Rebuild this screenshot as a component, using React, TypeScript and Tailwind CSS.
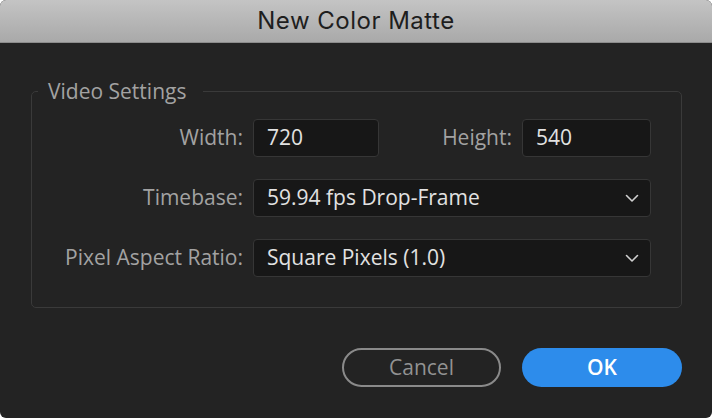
import React from "react";

function Chevron() {
  return (
    <svg width="14" height="9" viewBox="0 0 14 9" className="shrink-0">
      <path d="M1.5 1.5 L7 7 L12.5 1.5" fill="none" stroke="#d0d0d0" strokeWidth="1.6" strokeLinecap="round" strokeLinejoin="round" />
    </svg>
  );
}

function Select({ value }: { value: string }) {
  return (
    <div className="flex h-[38px] w-[398px] items-center justify-between rounded-[4px] border border-[#363636] bg-[#171717] pl-[13px] pr-[11px] text-[21px] text-[#e2e2e2]">
      <span>{value}</span>
      <Chevron />
    </div>
  );
}

export default function App() {
  const font = { fontFamily: '"Open Sans", "Liberation Sans", sans-serif' };
  return (
    <div className="h-[418px] w-[712px] bg-white" style={font}>
      <div className="flex h-full w-full flex-col overflow-hidden rounded-[6px] bg-[#232323]">
        <div
          className="flex h-[43px] shrink-0 items-center justify-center border-b border-[#8c8c8c] bg-gradient-to-b from-[#c4c4c4] to-[#a9a9a9] text-[24px] tracking-[0.5px] text-[#1e1e1e]"
          style={{ fontFamily: 'Inter, "Liberation Sans", sans-serif' }}
        >
          New Color Matte
        </div>
        <div className="flex flex-1 flex-col pl-[31px] pr-[30px] pt-[34px]">
          <fieldset className="m-0 h-[231px] w-[651px] rounded-[5px] border border-[#3a3a3a] p-0">
            <legend className="ml-[6px] pl-[10px] pr-[17px] text-[21px] leading-[28px] text-[#a2a2a2]">Video Settings</legend>
            <div className="grid grid-cols-[211px_398px] items-center gap-x-[10px] gap-y-[22px] pt-[14px]">
              <div className="text-right text-[21px] text-[#a2a2a2]">Width:</div>
              <div className="flex items-center">
                <div className="flex h-[38px] w-[126px] items-center rounded-[4px] border border-[#363636] bg-[#171717] pl-[13px] text-[21px] text-[#e2e2e2]">720</div>
                <div className="flex-1 pr-[10px] text-right text-[21px] text-[#a2a2a2]">Height:</div>
                <div className="flex h-[38px] w-[129px] items-center rounded-[4px] border border-[#363636] bg-[#171717] pl-[13px] text-[21px] text-[#e2e2e2]">540</div>
              </div>
              <div className="text-right text-[21px] text-[#a2a2a2]">Timebase:</div>
              <Select value="59.94 fps Drop-Frame" />
              <div className="text-right text-[21px] text-[#a2a2a2]">Pixel Aspect Ratio:</div>
              <Select value="Square Pixels (1.0)" />
            </div>
          </fieldset>
          <div className="mt-[40px] flex justify-end gap-[21px]">
            <button className="flex h-[39px] w-[159px] items-center justify-center rounded-full border-2 border-[#8a8a8a] text-[21px] text-[#929292]">Cancel</button>
            <button className="flex h-[39px] w-[160px] items-center justify-center rounded-full bg-[#2d8ceb] text-[21px] font-semibold text-white">OK</button>
          </div>
        </div>
      </div>
    </div>
  );
}
